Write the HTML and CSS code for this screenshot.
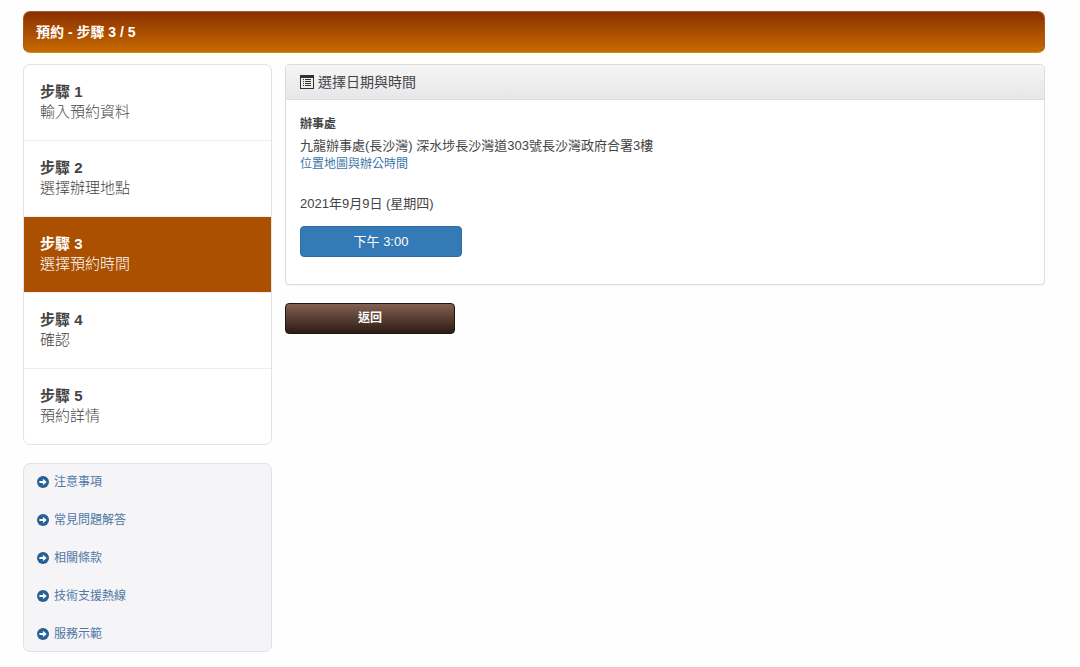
FILE: index.html
```html
<!DOCTYPE html>
<html lang="zh-Hant">
<head>
<meta charset="utf-8">
<meta name="viewport" content="width=device-width, initial-scale=1">
<title>預約 - 步驟 3 / 5</title>
<link rel="stylesheet" href="styles.css">
</head>
<body>
<svg class="sprite" aria-hidden="true">
  <symbol id="arrow" viewBox="0 0 12 12">
    <circle cx="6" cy="6" r="6" fill="currentColor"/>
    <path d="M2.4 5h3.5V2.8L9.7 6 5.9 9.2V7H2.4z" fill="#fff"/>
  </symbol>
</svg>
<div class="page">
  <header class="banner"><h1 class="banner-title">預約 - 步驟 3 / 5</h1></header>
  <div class="columns">
    <aside class="sidebar">
      <ol class="steps">
        <li class="step"><strong class="step-name">步驟 1</strong><span>輸入預約資料</span></li>
        <li class="step"><strong class="step-name">步驟 2</strong><span>選擇辦理地點</span></li>
        <li class="step step-active" aria-current="step"><strong class="step-name">步驟 3</strong><span>選擇預約時間</span></li>
        <li class="step"><strong class="step-name">步驟 4</strong><span>確認</span></li>
        <li class="step"><strong class="step-name">步驟 5</strong><span>預約詳情</span></li>
      </ol>
      <ul class="links">
        <li><a class="link" href="#"><svg class="link-icon"><use href="#arrow"/></svg>注意事項</a></li>
        <li><a class="link" href="#"><svg class="link-icon"><use href="#arrow"/></svg>常見問題解答</a></li>
        <li><a class="link" href="#"><svg class="link-icon"><use href="#arrow"/></svg>相關條款</a></li>
        <li><a class="link" href="#"><svg class="link-icon"><use href="#arrow"/></svg>技術支援熱線</a></li>
        <li><a class="link" href="#"><svg class="link-icon"><use href="#arrow"/></svg>服務示範</a></li>
      </ul>
    </aside>
    <main class="main">
      <section class="panel">
        <h2 class="panel-heading">
          <svg class="panel-icon" viewBox="0 0 14 14" aria-hidden="true">
            <path fill="currentColor" fill-rule="evenodd" d="M0 0h14v14H0zM1 3v10h12V3z"/>
            <path fill="currentColor" d="M3 4h1v1H3zM3 6h1v1H3zM3 8h1v1H3zM3 10h1v1H3zM5 4h6v1H5zM5 6h6v1H5zM5 8h6v1H5zM5 10h6v1H5z"/>
          </svg>
          選擇日期與時間
        </h2>
        <div class="panel-body">
          <h3 class="office">辦事處</h3>
          <p class="address">九龍辦事處(長沙灣) 深水埗長沙灣道303號長沙灣政府合署3樓</p>
          <a class="map-link" href="#">位置地圖與辦公時間</a>
          <p class="date">2021年9月9日 (星期四)</p>
          <button class="button time" type="button">下午 3:00</button>
        </div>
      </section>
      <button class="button back" type="button">返回</button>
    </main>
  </div>
</div>
</body>
</html>
```
FILE: styles.css
```css
* {
  box-sizing: border-box;
}

body {
  margin: 0;
  background: #fefefe;
  color: #444;
  font-family: "Liberation Sans", "Noto Sans CJK TC", sans-serif;
  font-size: 13px;
  line-height: 18px;
}

h1, h2, h3, p, ol, ul {
  margin: 0;
  padding: 0;
}

ol, ul {
  list-style: none;
}

.sprite {
  display: none;
}

.page {
  padding: 11px 35px 15px 23px;
}

.banner {
  padding: 11px 12px;
  border: 1px solid #a85a14;
  border-top-color: #a2603a;
  border-bottom-color: #d08a1c;
  border-radius: 7px;
  background: linear-gradient(#8a3000, #c86a00);
}

.banner-title {
  color: #fff;
  font-size: 14px;
  line-height: 18px;
}

.columns {
  display: grid;
  grid-template-columns: minmax(0, 249fr) minmax(0, 760fr);
  gap: 13px;
  align-items: start;
  margin-top: 11px;
}

.sidebar {
  display: grid;
  gap: 18px;
}

.steps {
  overflow: hidden;
  border: 1px solid #e2e2e6;
  border-radius: 7px;
  background: #fff;
}

.step {
  display: flex;
  flex-direction: column;
  padding: 16px 16px 18px;
  font-size: 15px;
  font-weight: 300;
  line-height: 20px;
}

.step + .step {
  border-top: 1px solid #eeeef2;
}

.step-name {
  font-weight: 700;
  line-height: 21px;
}

.step-active {
  background: #ab4f00;
  color: #fff;
}

.links {
  display: grid;
  gap: 4px;
  padding: 1px 13px 0;
  border: 1px solid #e2e0e6;
  border-radius: 7px;
  background: #f5f4f6;
}

.link {
  display: flex;
  align-items: center;
  gap: 5px;
  color: #4f78a5;
  font-size: 12px;
  line-height: 34px;
  text-decoration: none;
}

.link-icon {
  width: 12px;
  height: 12px;
  color: #285f95;
}

.panel {
  overflow: hidden;
  border: 1px solid #dddde1;
  border-radius: 4px;
  background: #fff;
  box-shadow: 0 1px 1px #0000000d;
}

.panel-heading {
  display: flex;
  align-items: center;
  gap: 4px;
  padding: 7px 14px;
  border-bottom: 1px solid #dfdfe1;
  background: linear-gradient(#f5f5f5, #e7e7e9);
  font-size: 14px;
  font-weight: 400;
  line-height: 20px;
}

.panel-icon {
  width: 14px;
  height: 14px;
  color: #333;
}

.panel-body {
  padding: 15px 14px 27px;
}

.office {
  margin-bottom: 4px;
  font-size: 12px;
}

.map-link {
  display: block;
  color: #3b76a8;
  font-size: 12px;
  text-decoration: none;
}

.date {
  margin-top: 22px;
}

.button {
  display: block;
  padding: 5px 12px;
  border-radius: 4px;
  color: #fff;
  font: inherit;
  line-height: 19px;
}

.time {
  width: 162px;
  max-width: 100%;
  margin-top: 13px;
  border: 1px solid #2e6da4;
  background: #337ab7;
}

.back {
  width: 170px;
  max-width: 100%;
  margin-top: 18px;
  border: 1px solid #1f1613;
  background: linear-gradient(#836150, #2c1b14);
  font-size: 12px;
  font-weight: 700;
}
```
